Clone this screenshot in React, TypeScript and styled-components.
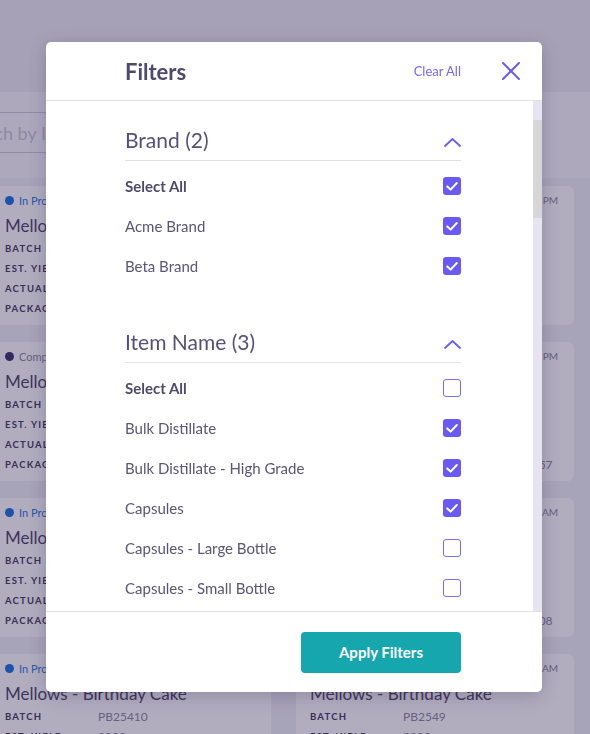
import React from "react";
import styled, { createGlobalStyle } from "styled-components";

const GlobalStyle = createGlobalStyle`
  html, body { margin: 0; padding: 0; }
  body {
    background: #f0eff4;
    font-family: Lato, "Open Sans", sans-serif;
    overflow: hidden;
  }
  * { box-sizing: border-box; }
`;

/* ---------- background page ---------- */

const Page = styled.div`
  width: 590px;
  height: 734px;
  overflow: hidden;
  background: #f0eff4;
  display: flex;
  flex-direction: column;
`;

const TopBar = styled.div`
  flex: none;
  height: 92px;
  background: #eeedf2;
`;

const SearchBand = styled.div`
  flex: none;
  height: 86px;
  background: #f9f8fb;
  padding-top: 20px;
`;

const SearchInput = styled.div`
  margin-left: -40px;
  width: 560px;
  height: 41px;
  border-top: 1px solid #cdcad9;
  border-bottom: 1px solid #cdcad9;
  display: flex;
  align-items: center;
  font-size: 18px;
  color: #c9c6d2;
`;

const CardGrid = styled.div`
  display: grid;
  grid-template-columns: 280px 278px;
  column-gap: 25px;
  row-gap: 17px;
  margin-left: -9px;
  padding-top: 8px;
`;

const Card = styled.div`
  background: #ffffff;
  border-radius: 6px;
  height: 139px;
  padding: 8px 16px 0 14px;
  display: flex;
  flex-direction: column;
`;

const StatusRow = styled.div`
  display: flex;
  align-items: center;
  justify-content: space-between;
  height: 12px;
  font-size: 11px;
`;

const Status = styled.span<{ $done?: boolean }>`
  display: flex;
  align-items: center;
  gap: 5px;
  color: ${(p) => (p.$done ? "#8b879d" : "#2c78e2")};
  &::before {
    content: "";
    width: 9px;
    height: 9px;
    border-radius: 50%;
    background: ${(p) => (p.$done ? "#3b2f6a" : "#1570dc")};
  }
`;

const Time = styled.span`
  color: #8b879d;
  font-size: 10px;
`;

const CardTitle = styled.div`
  margin-top: 10px;
  height: 20px;
  line-height: 20px;
  font-size: 17px;
  color: #4b4566;
  white-space: nowrap;
`;

const Rows = styled.div`
  margin-top: 2px;
  display: flex;
  flex-direction: column;
`;

const InfoRow = styled.div`
  display: flex;
  height: 20px;
  align-items: center;
  white-space: nowrap;
`;

const Label = styled.span`
  width: 93px;
  flex: none;
  font-size: 9.5px;
  font-weight: 700;
  letter-spacing: 1.2px;
  color: #3f3a58;
`;

const Value = styled.span`
  font-size: 12px;
  color: #8b879d;
`;

/* ---------- modal ---------- */

const Overlay = styled.div`
  position: fixed;
  inset: 0;
  background: rgba(40, 30, 80, 0.365);
  display: flex;
  align-items: flex-start;
  padding: 42px 0 0 46px;
`;

const Modal = styled.div`
  width: 496px;
  height: 650px;
  background: #ffffff;
  border-radius: 5px;
  box-shadow: 0 4px 18px rgba(30, 20, 60, 0.22);
  display: flex;
  flex-direction: column;
  overflow: hidden;
`;

const Header = styled.div`
  flex: none;
  height: 59px;
  border-bottom: 1px solid #e2dfeb;
  display: flex;
  align-items: center;
  padding: 0 22px 0 79px;
`;

const Title = styled.h2`
  margin: 0 auto 0 0;
  font-size: 22px;
  font-weight: 700;
  color: #4f496e;
`;

const ClearAll = styled.button`
  border: none;
  background: none;
  padding: 0;
  margin-right: 41px;
  font-family: inherit;
  font-size: 13px;
  color: #7768f5;
  cursor: pointer;
`;

const CloseButton = styled.button`
  border: none;
  background: none;
  padding: 0;
  width: 18px;
  height: 18px;
  display: flex;
  cursor: pointer;
`;

const BodyWrap = styled.div`
  flex: 1;
  min-height: 0;
  display: flex;
`;

const Body = styled.div`
  flex: 1;
  min-width: 0;
  overflow: hidden;
  padding: 25px 72px 40px 79px;
`;

const ScrollTrack = styled.div`
  flex: none;
  width: 9px;
  background: #e6e4f0;
  padding-top: 19px;
`;

const ScrollThumb = styled.div`
  height: 98px;
  background: #d6d6d6;
`;

const Section = styled.section`
  margin-bottom: 42px;
`;

const SectionHead = styled.div`
  height: 35px;
  border-bottom: 1px solid #e2dfeb;
  display: flex;
  justify-content: space-between;
  align-items: flex-start;
`;

const SectionTitle = styled.h3`
  margin: 0;
  font-size: 21px;
  line-height: 28px;
  font-weight: 400;
  color: #57517a;
`;

const Chevron = styled.svg`
  margin-top: 12px;
  flex: none;
`;

const List = styled.div`
  padding-top: 5px;
`;

const Row = styled.label<{ $bold?: boolean }>`
  display: flex;
  align-items: center;
  justify-content: space-between;
  height: 40px;
  font-size: 15px;
  font-weight: ${(p) => (p.$bold ? 700 : 400)};
  color: ${(p) => (p.$bold ? "#4f496e" : "#5b5678")};
`;

const Box = styled.span<{ $checked: boolean }>`
  width: 18px;
  height: 18px;
  flex: none;
  border-radius: 3px;
  display: flex;
  align-items: center;
  justify-content: center;
  background: ${(p) => (p.$checked ? "#6a5af5" : "#ffffff")};
  border: ${(p) => (p.$checked ? "none" : "1.5px solid #7a6bf6")};
`;

const Footer = styled.div`
  flex: none;
  height: 81px;
  border-top: 1px solid #e2dfeb;
  display: flex;
  align-items: center;
  justify-content: flex-end;
  padding-right: 81px;
`;

const ApplyButton = styled.button`
  width: 160px;
  height: 41px;
  border: none;
  border-radius: 4px;
  background: #15a6ae;
  color: #ffffff;
  font-family: inherit;
  font-size: 15px;
  font-weight: 700;
  cursor: pointer;
`;

/* ---------- data ---------- */

type Item = { name: string; checked: boolean };
type Group = { title: string; count: number; all: boolean; items: Item[] };

const mk = (names: string[], checked: string[] = []): Item[] =>
  names.map((n) => ({ name: n, checked: checked.includes(n) }));

const groups: Group[] = [
  {
    title: "Brand",
    count: 2,
    all: true,
    items: mk(["Acme Brand", "Beta Brand"], ["Acme Brand", "Beta Brand"]),
  },
  {
    title: "Item Name",
    count: 3,
    all: false,
    items: mk(
      [
        "Bulk Distillate",
        "Bulk Distillate - High Grade",
        "Capsules",
        "Capsules - Large Bottle",
        "Capsules - Small Bottle",
        "Cartridge - 0.5g",
        "Cartridge - 1g",
        "Chocolate Bar - Dark",
        "Chocolate Bar - Milk",
        "Gummies - Assorted",
        "Gummies - Sour",
        "Mellows - Birthday Cake",
        "Mellows - Original",
      ],
      ["Bulk Distillate", "Bulk Distillate - High Grade", "Capsules"]
    ),
  },
  {
    title: "Status",
    count: 0,
    all: false,
    items: mk(["Completed", "In Progress", "Not Started", "Cancelled"]),
  },
];

type CardData = {
  done?: boolean;
  time?: string;
  rows: [string, string][];
};

const cards: CardData[] = [
  { rows: [["Batch", "PB25412"], ["Est. Yield", "2000 ea"], ["Actual Yield", "1980 ea"], ["Packages", "4"]] },
  { time: "Mar 4, 2021 2:13 PM", rows: [["Batch", "PB2551"], ["Est. Yield", "2000 ea"], ["Actual Yield", "1995 ea"], ["Packages", "12"]] },
  { done: true, rows: [["Batch", "PB25411"], ["Est. Yield", "2000 ea"], ["Actual Yield", "2000 ea"], ["Packages", "1A40603000029F5"]] },
  { done: true, time: "Mar 3, 2021 4:21 PM", rows: [["Batch", "PB2550"], ["Est. Yield", "2000 ea"], ["Actual Yield", "1990 ea"], ["Packages", "1A406030000A5C1000457"]] },
  { rows: [["Batch", "PB25410"], ["Est. Yield", "2000 ea"], ["Actual Yield", "1970 ea"], ["Packages", "3"]] },
  { time: "Mar 2, 2021 9:45 AM", rows: [["Batch", "PB2548"], ["Est. Yield", "2000 ea"], ["Actual Yield", "1985 ea"], ["Packages", "1A406030000A5C1000508"]] },
  { rows: [["Batch", "PB25410"], ["Est. Yield", "2000 ea"], ["Actual Yield", "1970 ea"], ["Packages", "2"]] },
  { time: "Mar 1, 2021 8:10 AM", rows: [["Batch", "PB2549"], ["Est. Yield", "2000 ea"], ["Actual Yield", "1960 ea"], ["Packages", "6"]] },
];

/* ---------- components ---------- */

const Check = ({ checked }: { checked: boolean }) => (
  <Box $checked={checked}>
    {checked && (
      <svg width="18" height="18" viewBox="0 0 18 18">
        <path
          d="M4.2 9.4 L7.6 12.6 L13.8 6"
          fill="none"
          stroke="#ffffff"
          strokeWidth="2"
          strokeLinecap="round"
          strokeLinejoin="round"
        />
      </svg>
    )}
  </Box>
);

const FilterGroup = ({ group }: { group: Group }) => (
  <Section>
    <SectionHead>
      <SectionTitle>
        {group.title} ({group.count})
      </SectionTitle>
      <Chevron width="17" height="9" viewBox="0 0 17 9">
        <path
          d="M1 8 L8.5 1 L16 8"
          fill="none"
          stroke="#6c5df3"
          strokeWidth="1.8"
          strokeLinecap="round"
          strokeLinejoin="round"
        />
      </Chevron>
    </SectionHead>
    <List>
      <Row $bold>
        Select All
        <Check checked={group.all} />
      </Row>
      {group.items.map((it) => (
        <Row key={it.name}>
          {it.name}
          <Check checked={it.checked} />
        </Row>
      ))}
    </List>
  </Section>
);

export default function App() {
  return (
    <>
      <GlobalStyle />
      <Page>
        <TopBar />
        <SearchBand>
          <SearchInput>Search by Item Name</SearchInput>
        </SearchBand>
        <CardGrid>
          {cards.map((c, i) => (
            <Card key={i}>
              <StatusRow>
                <Status $done={c.done}>{c.done ? "Completed" : "In Progress"}</Status>
                {c.time && <Time>{c.time}</Time>}
              </StatusRow>
              <CardTitle>Mellows - Birthday Cake</CardTitle>
              <Rows>
                {c.rows.map(([l, v]) => (
                  <InfoRow key={l}>
                    <Label>{l.toUpperCase()}</Label>
                    <Value>{v}</Value>
                  </InfoRow>
                ))}
              </Rows>
            </Card>
          ))}
        </CardGrid>
      </Page>
      <Overlay>
        <Modal>
          <Header>
            <Title>Filters</Title>
            <ClearAll>Clear All</ClearAll>
            <CloseButton aria-label="Close">
              <svg width="18" height="18" viewBox="0 0 18 18">
                <path
                  d="M1 1 L17 17 M17 1 L1 17"
                  stroke="#6c5df3"
                  strokeWidth="2"
                  strokeLinecap="round"
                />
              </svg>
            </CloseButton>
          </Header>
          <BodyWrap>
            <Body>
              {groups.map((g) => (
                <FilterGroup key={g.title} group={g} />
              ))}
            </Body>
            <ScrollTrack>
              <ScrollThumb />
            </ScrollTrack>
          </BodyWrap>
          <Footer>
            <ApplyButton>Apply Filters</ApplyButton>
          </Footer>
        </Modal>
      </Overlay>
    </>
  );
}
